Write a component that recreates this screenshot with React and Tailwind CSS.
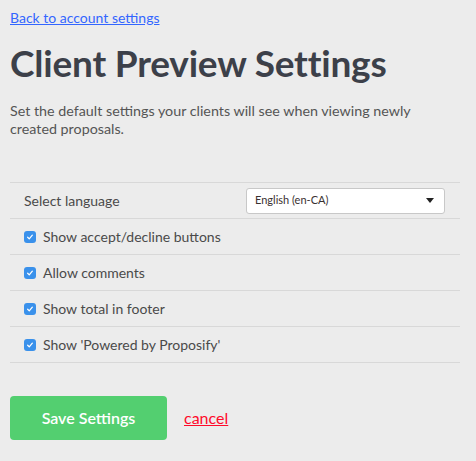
import React, { useState } from 'react';

const options = [
    { id: 'accept', label: 'Show accept/decline buttons' },
    { id: 'comments', label: 'Allow comments' },
    { id: 'total', label: 'Show total in footer' },
    { id: 'powered', label: "Show 'Powered by Proposify'" },
];

const Check = ({ checked, onChange }) => (
    <button
        type="button"
        onClick={onChange}
        className={`w-[12px] h-[12px] rounded-[3px] flex items-center justify-center ${checked ? 'bg-[#3a91eb]' : 'bg-white border border-gray-400'}`}
    >
        {checked && (
            <svg viewBox="0 0 12 12" className="w-[10px] h-[10px]">
                <path d="M3.2 6.3l1.9 1.9 3.7-4.4" fill="none" stroke="white" strokeWidth="1.5" strokeLinecap="round" strokeLinejoin="round" />
            </svg>
        )}
    </button>
);

export default function App() {
    const [checks, setChecks] = useState({ accept: true, comments: true, total: true, powered: true });

    return (
        <div className="min-h-screen w-full bg-[#ececec] px-[10px] pt-[5px] text-[#4a4a4a]" style={{ fontFamily: 'Lato, "Open Sans", sans-serif' }}>
            <a href="#" className="text-[14px] leading-[18px] text-[#3366ff] underline">Back to account settings</a>

            <h1 className="mt-[12px] text-[37px] leading-[44px] font-bold text-[#3c4049] tracking-[-0.2px]">Client Preview Settings</h1>

            <p className="mt-[17px] text-[14.3px] leading-[18px] text-[#555] pr-[40px]">
                Set the default settings your clients will see when viewing newly created proposals.
            </p>

            <div className="mt-[44px] w-[450px] border-t border-[#d8d8d8]">
                <div className="h-[36px] flex items-center justify-between border-b border-[#d8d8d8] pl-[14px] pr-[15px]">
                    <span className="text-[14px] text-[#4a4a4a]">Select language</span>
                    <div className="w-[199px] h-[26px] bg-white border border-[#c8c8c8] rounded-[3px] flex items-center justify-between pl-[8px] pr-[10px]">
                        <span className="text-[11px] text-[#3a3030]">English (en-CA)</span>
                        <svg viewBox="0 0 8 5" className="w-[8px] h-[5px]"><path d="M0 0h8L4 5z" fill="#222" /></svg>
                    </div>
                </div>
                {options.map((o) => (
                    <div key={o.id} className="h-[36px] flex items-center gap-[7px] border-b border-[#d8d8d8] pl-[14px]">
                        <Check checked={checks[o.id]} onChange={() => setChecks({ ...checks, [o.id]: !checks[o.id] })} />
                        <span className="text-[14px] text-[#4a4a4a]">{o.label}</span>
                    </div>
                ))}
            </div>

            <div className="mt-[33px] flex items-center gap-[17px]">
                <button className="w-[157px] h-[44px] rounded-[4px] bg-[#53cf70] text-white text-[16px] font-semibold">Save Settings</button>
                <a href="#" className="text-[16px] text-[#ff0a2a] underline">cancel</a>
            </div>
        </div>
    );
}
